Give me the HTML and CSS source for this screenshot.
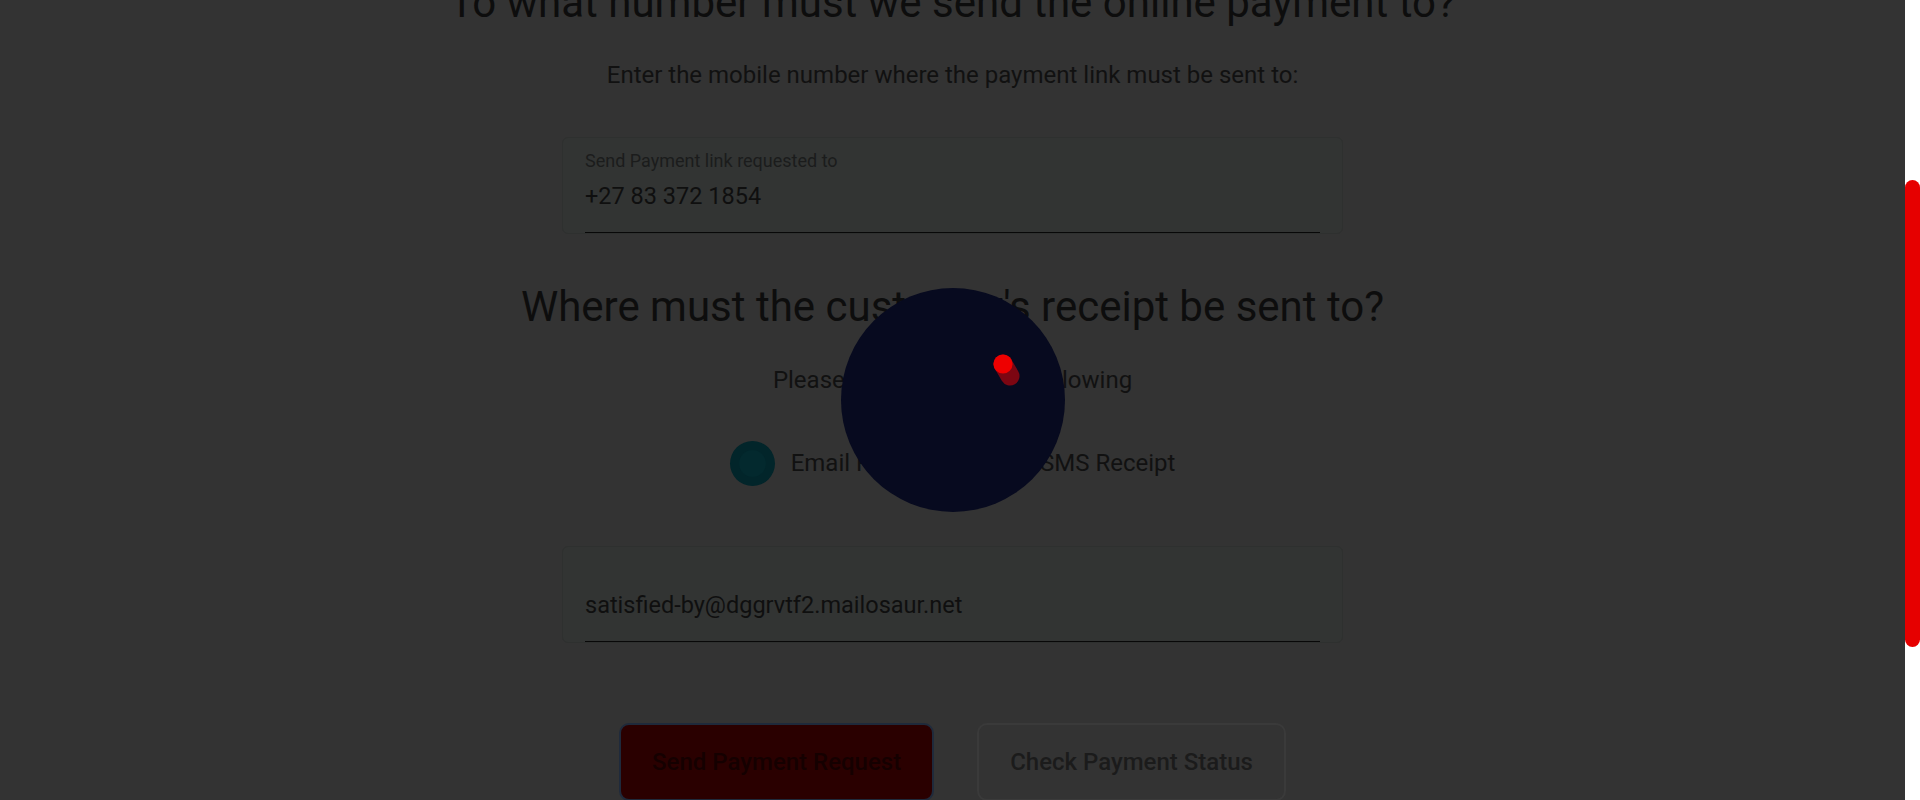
FILE: index.html
```html
<!DOCTYPE html>
<html lang="en">
<head>
<meta charset="utf-8">
<title>Online payment</title>
<link rel="stylesheet" href="styles.css">
</head>
<body>
<div class="window">
  <main class="page">
    <div class="content">
      <h1 class="title">To what number must we send the online payment to?</h1>
      <p class="lead">Enter the mobile number where the payment link must be sent to:</p>
      <div class="field">
        <div class="field-inner">
          <span class="field-label">Send Payment link requested to</span>
          <span class="field-value">+27 83 372 1854</span>
        </div>
      </div>
      <h2 class="title title-2">Where must the customer's receipt be sent to?</h2>
      <p class="lead lead-2">Please select one of the following</p>
      <div class="radios">
        <label class="option">
          <span class="radio"><span class="radio-dot"></span></span>
          <span class="option-text">Email Receipt</span>
        </label>
        <label class="option">
          <span class="radio radio-off"><span class="radio-dot"></span></span>
          <span class="option-text">SMS Receipt</span>
        </label>
      </div>
      <div class="field field-2">
        <div class="field-inner">
          <span class="field-label"></span>
          <span class="field-value">satisfied-by@dggrvtf2.mailosaur.net</span>
        </div>
      </div>
      <div class="actions">
        <button class="btn btn-primary">Send Payment Request</button>
        <button class="btn btn-outline">Check Payment Status</button>
      </div>
    </div>
    <div class="loader">
      <div class="spinner">
        <svg width="224" height="224" viewBox="0 0 224 224">
          <line x1="162" y1="76" x2="169" y2="88" stroke="#7c0612" stroke-width="19" stroke-linecap="round"/>
          <circle cx="162" cy="76" r="9.6" fill="#ee0000"/>
        </svg>
      </div>
    </div>
  </main>
  <div class="scrollbar"><div class="thumb"></div></div>
</div>
</body>
</html>
```
FILE: styles.css
```css
* { box-sizing: border-box; }
html, body { margin: 0; padding: 0; height: 800px; overflow: hidden; }
body { font-family: Roboto, "Liberation Sans", sans-serif; background: #333333; }

.window { display: flex; height: 800px; }

.page {
  position: relative;
  flex: 1;
  background: #333333;
  overflow: hidden;
}

.content {
  width: 781px;
  margin: -22px auto 0;
  display: flex;
  flex-direction: column;
  align-items: stretch;
}

.title {
  margin: 0 -200px;
  font-size: 42px;
  line-height: 50px;
  font-weight: 400;
  color: #0d0d0d;
  text-align: center;
  white-space: nowrap;
}
.title-2 { margin-top: 48px; }

.lead {
  margin: 32px 0 0;
  font-size: 24px;
  line-height: 30px;
  color: #111111;
  text-align: center;
}
.lead-2 { margin-top: 33px; }

.field {
  margin-top: 47px;
  background: #323433;
  border: 1px solid #2e302f;
  border-radius: 6px;
  padding: 0 22px;
}
.field-2 { margin-top: 61px; }
.field-inner {
  display: flex;
  flex-direction: column;
  padding: 11px 0 21px;
  border-bottom: 1px solid #080808;
}
.field-label {
  display: block;
  height: 24px;
  font-size: 18px;
  line-height: 24px;
  color: #1b1c1c;
}
.field-value {
  display: block;
  margin-top: 8px;
  font-size: 23.5px;
  line-height: 30px;
  color: #0f0f0f;
}

.radios {
  margin-top: 46px;
  display: flex;
  justify-content: center;
  gap: 43px;
  height: 44px;
}
.option {
  display: flex;
  align-items: center;
  gap: 16px;
}
.radio {
  width: 45px;
  height: 45px;
  border-radius: 50%;
  background: #02252a;
  display: flex;
  align-items: center;
  justify-content: center;
}
.radio-dot {
  width: 27px;
  height: 27px;
  border-radius: 50%;
  background: #03292e;
}
.radio-off { background: transparent; }
.radio-off .radio-dot { background: transparent; border: 2px solid #151515; width: 22px; height: 22px; }
.option-text {
  font-size: 24px;
  line-height: 44px;
  color: #111111;
}

.actions {
  margin-top: 80px;
  display: flex;
  justify-content: center;
  gap: 43px;
}
.btn {
  height: 78px;
  padding: 0 31px;
  border-radius: 10px;
  font-family: Roboto, "Liberation Sans", sans-serif;
  font-size: 24px;
  font-weight: 500;
  background: transparent;
}
.btn-primary {
  background: #2a0000;
  border: 2px solid #1f2a3b;
  color: #150000;
}
.btn-outline {
  border: 2px solid #3a3a3a;
  color: #1b1b1b;
}

.loader {
  position: absolute;
  inset: 0;
  display: flex;
  align-items: center;
  justify-content: center;
}
.spinner {
  width: 224px;
  height: 224px;
  border-radius: 50%;
  background: #070a1f;
}
.spinner svg { display: block; }

.scrollbar {
  width: 15px;
  flex: none;
  background: #ffffff;
}
.thumb {
  margin-top: 180px;
  height: 467px;
  border-radius: 8px;
  background: #e60000;
}
```
